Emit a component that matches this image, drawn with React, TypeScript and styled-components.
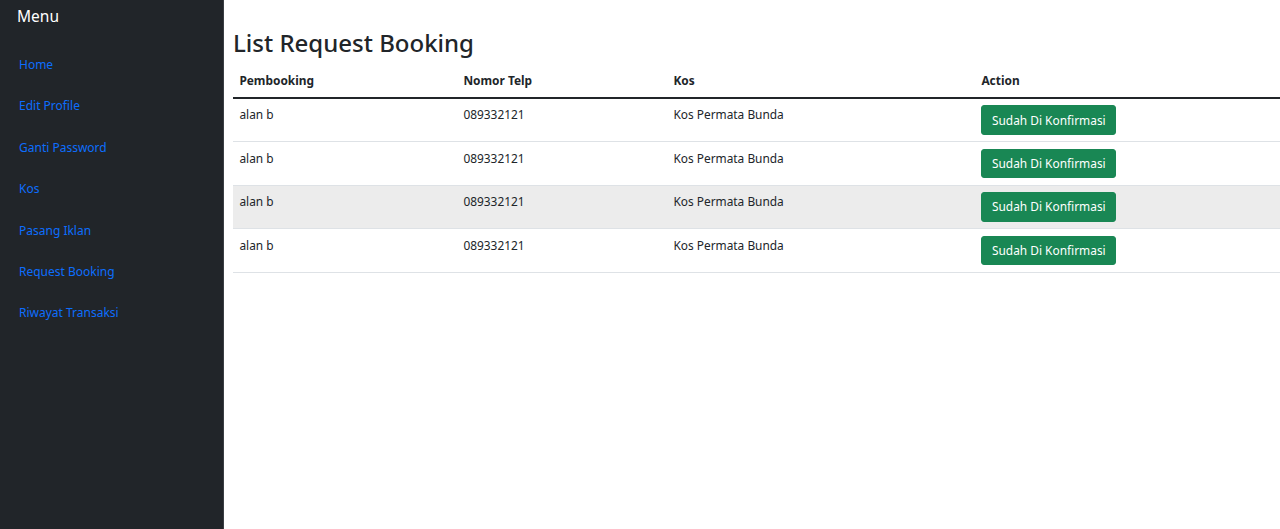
import React from "react";
import styled, { createGlobalStyle } from "styled-components";

const Global = createGlobalStyle`
  html, body { margin: 0; padding: 0; background: #fff; }
  body {
    font-family: "Segoe UI", "Noto Sans", "Liberation Sans", sans-serif;
    font-size: 11.9px;
    line-height: 19.2px;
    color: #212529;
  }
  * { box-sizing: border-box; }
`;

const Layout = styled.div`
  display: flex;
  min-height: 529px;
`;

const Sidebar = styled.aside`
  width: 224px;
  flex-shrink: 0;
  background: #212529;
  border-right: 1px solid #3a3e43;
  padding: 4px 0 0 0;
`;

const MenuTitle = styled.div`
  color: #fff;
  font-size: 15.5px;
  line-height: 24px;
  padding-left: 17px;
  margin-bottom: 16px;
`;

const NavList = styled.nav`
  display: flex;
  flex-direction: column;
`;

const NavLink = styled.a`
  color: #0d6efd;
  text-decoration: none;
  font-size: 12px;
  line-height: 19.2px;
  padding: 11.1px 19px;
`;

const Main = styled.main`
  flex: 1;
  padding: 28px 0 0 9px;
`;

const Title = styled.h2`
  margin: 0 0 6.4px 0;
  font-size: 24px;
  font-weight: 500;
  line-height: 30.7px;
`;

const Table = styled.table`
  width: 100%;
  border-collapse: collapse;
`;

const Th = styled.th<{ $w?: number }>`
  text-align: left;
  font-weight: 700;
  padding: 6.4px;
  width: ${(p) => (p.$w ? `${p.$w}px` : "auto")};
  border-bottom: 2px solid #212529;
`;

const Tr = styled.tr<{ $hover?: boolean }>`
  background: ${(p) => (p.$hover ? "#ececec" : "transparent")};
`;

const Td = styled.td`
  padding: 6.4px;
  vertical-align: top;
  border-bottom: 1px solid #dee2e6;
`;

const Button = styled.button`
  display: block;
  font-family: inherit;
  font-size: 11.9px;
  line-height: 19.2px;
  color: #fff;
  background: #198754;
  border: 1px solid #198754;
  border-radius: 3px;
  padding: 4.2px 9.6px;
  cursor: pointer;
`;

const links = [
  "Home",
  "Edit Profile",
  "Ganti Password",
  "Kos",
  "Pasang Iklan",
  "Request Booking",
  "Riwayat Transaksi",
];

const rows = [0, 1, 2, 3].map((i) => ({
  name: "alan b",
  phone: "089332121",
  kos: "Kos Permata Bunda",
  hover: i === 2,
}));

export default function App() {
  return (
    <>
      <Global />
      <Layout>
        <Sidebar>
          <MenuTitle>Menu</MenuTitle>
          <NavList>
            {links.map((l) => (
              <NavLink key={l} href="#">
                {l}
              </NavLink>
            ))}
          </NavList>
        </Sidebar>
        <Main>
          <Title>List Request Booking</Title>
          <Table>
            <thead>
              <tr>
                <Th $w={224}>Pembooking</Th>
                <Th $w={210}>Nomor Telp</Th>
                <Th $w={308}>Kos</Th>
                <Th>Action</Th>
              </tr>
            </thead>
            <tbody>
              {rows.map((r, i) => (
                <Tr key={i} $hover={r.hover}>
                  <Td>{r.name}</Td>
                  <Td>{r.phone}</Td>
                  <Td>{r.kos}</Td>
                  <Td>
                    <Button>Sudah Di Konfirmasi</Button>
                  </Td>
                </Tr>
              ))}
            </tbody>
          </Table>
        </Main>
      </Layout>
    </>
  );
}
